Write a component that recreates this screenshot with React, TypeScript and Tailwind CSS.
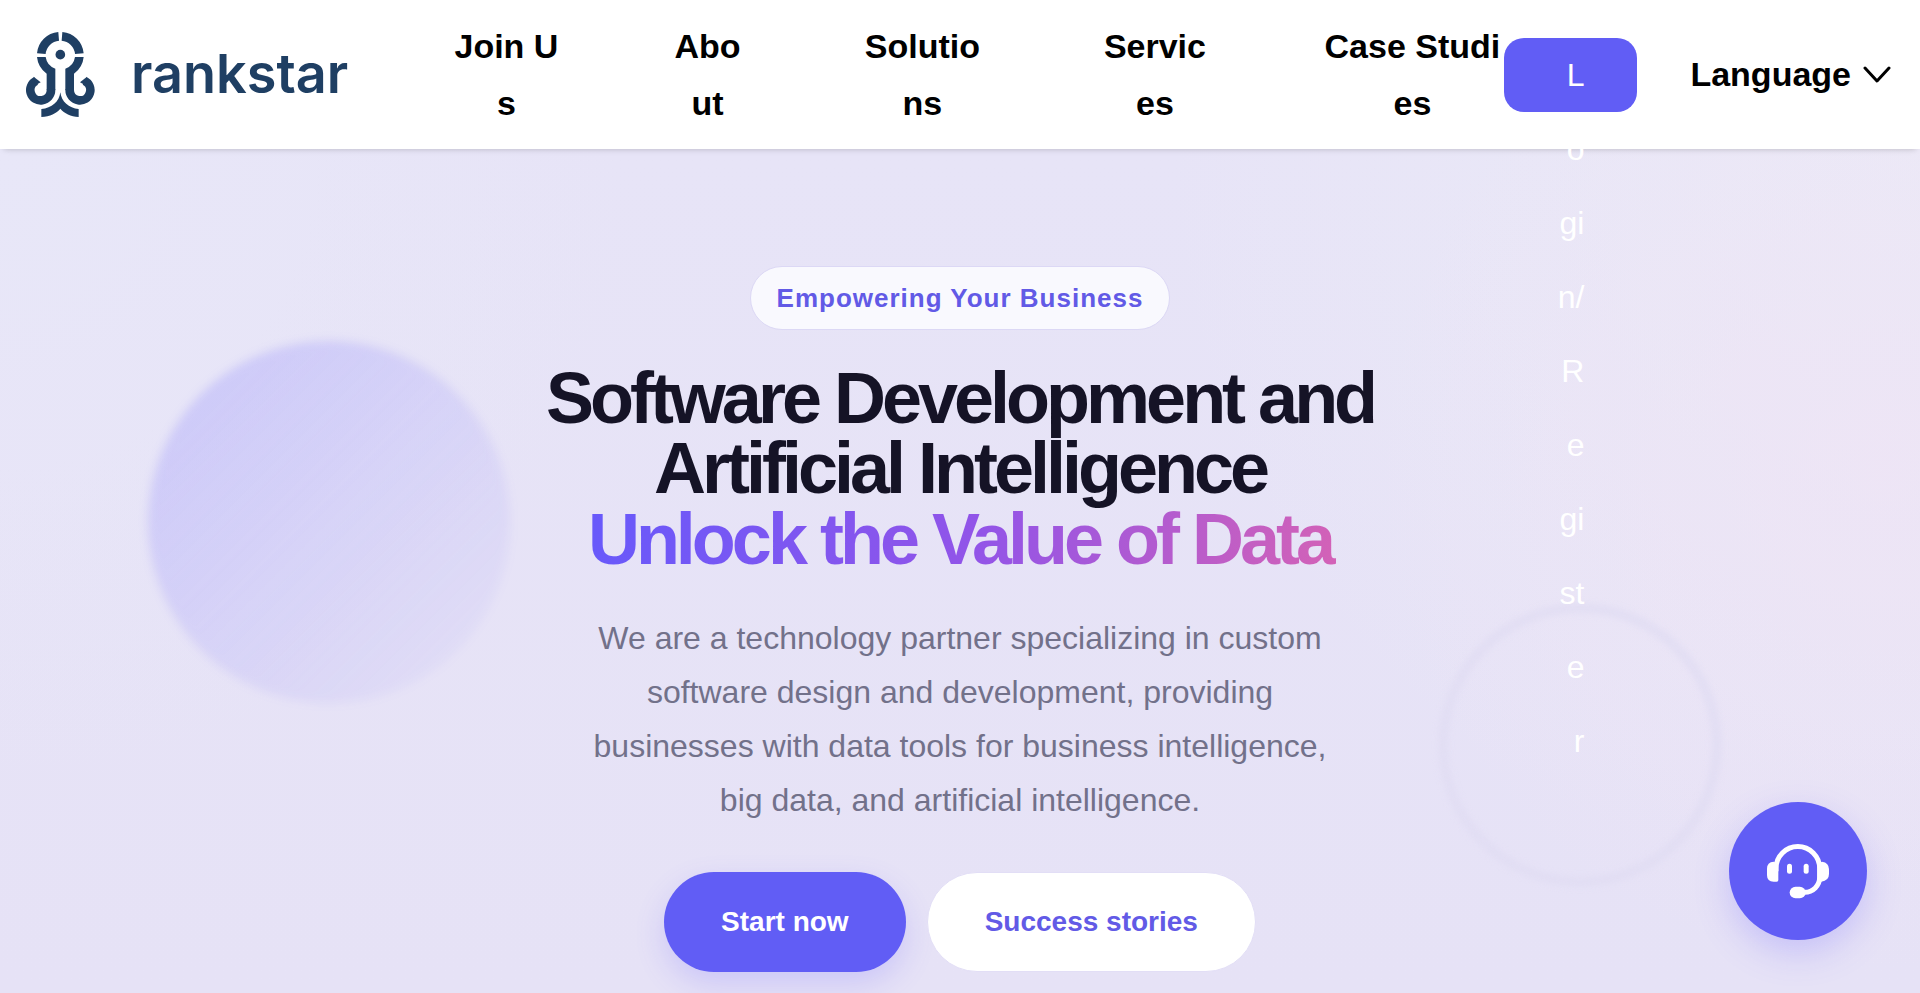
const navItems = [
  { label: 'Join Us', width: 'w-[106px]' },
  { label: 'About', width: 'w-[76px]' },
  { label: 'Solutions', width: 'w-[134px]' },
  { label: 'Services', width: 'w-[111px]' },
  { label: 'Case Studies', width: 'w-[184px]' },
];

function OctopusMark() {
  return (
    <svg viewBox="78 96 207 255" className="h-[85px] w-[69px] shrink-0" fill="none" aria-hidden="true">
      <g stroke="#1f3f63" strokeWidth="26">
        <path d="M124 161 A57 57 0 0 1 176 109" />
        <path d="M186 109 A57 57 0 0 1 238 161" />
        <path d="M153 268 V270 A31 31 0 1 1 108 242.500" />
        <path d="M209 268 V270 A31 31 0 1 0 254 242.500" />
      </g>
      <g fill="#1f3f63">
        <path d="M111 171 H137 A44 44 0 0 0 166 206 V270 H140 V221 A70 70 0 0 1 111 171 Z" />
        <path d="M251 171 H225 A44 44 0 0 1 196 206 V270 H222 V221 A70 70 0 0 0 251 171 Z" />
        <circle cx="181" cy="164" r="14.500" />
        <path d="M101 230 L122 247 L106 256 Z" />
        <path d="M261 230 L240 247 L256 256 Z" />
        <path d="M181 277 C178 305 155 325 124 327 V351 C150 350 169 340 181 326 C193 340 212 350 236 351 V327 C207 325 184 305 181 277 Z" />
      </g>
    </svg>
  );
}

function HeadsetIcon() {
  return (
    <svg viewBox="0 0 186 165" className="h-[55px] w-[62px]" fill="none" aria-hidden="true">
      <path
        d="M27 82 V73 A65.500 65.500 0 0 1 158 73 V100 A45 45 0 0 1 113 145 H98"
        stroke="#fff"
        strokeWidth="15"
      />
      <g fill="#fff">
        <path d="M34 60 V108 Q34 113 29 113 H20 Q0 113 0 93 V74 Q0 54 20 53 Z" />
        <path d="M151 60 V113 H163 Q186 110 186 90 V76 Q186 56 165 53 Z" />
        <rect x="60" y="59" width="15" height="30" rx="7.500" />
        <rect x="110" y="59" width="15" height="30" rx="7.500" />
        <rect x="68" y="128" width="48" height="35" rx="17.500" />
      </g>
    </svg>
  );
}

function Header() {
  return (
    <header className="relative z-20 flex min-h-[149px] items-center bg-white pr-[29px] pl-[26px] shadow-[0_4px_6px_-4px_rgba(0,0,0,0.22)]">
      <a href="#home" className="flex items-center gap-9 text-[#1f3f63]">
        <OctopusMark />
        <span className="pb-0.5 font-[Inter,sans-serif] text-[54px] leading-[64px] font-semibold">rankstar</span>
      </a>
      <nav className="ml-auto flex gap-[110px]">
        {navItems.map((item) => (
          <a
            key={item.label}
            href="#menu"
            className={`${item.width} text-center text-[34px] leading-[57px] font-bold break-all text-black`}
          >
            {item.label}
          </a>
        ))}
      </nav>
      <a
        href="#login"
        className="block h-[74px] w-[133px] rounded-[20px] bg-[#615df5] px-[53px] text-right text-[32px] leading-[74px] break-all text-white"
      >
        Login/Register
      </a>
      <button type="button" className="ml-[53px] flex items-center gap-3 text-[34px] leading-[57px] font-bold text-black">
        Language
        <svg viewBox="0 0 28 18" className="h-[18px] w-7" fill="none" aria-hidden="true">
          <path d="M2 2 L14 15 L26 2" stroke="#000" strokeWidth="3" strokeLinecap="round" strokeLinejoin="round" />
        </svg>
      </button>
    </header>
  );
}

function Hero() {
  return (
    <main className="relative flex flex-1 flex-col items-center overflow-hidden bg-[radial-gradient(circle_at_98%_38%,rgba(239,228,245,0.75),transparent_26%),radial-gradient(circle_at_100%_0%,#ebeaf7,transparent_36%),radial-gradient(circle_at_0%_0%,#e8e7f8,transparent_30%),linear-gradient(#e7e4f7,#e6e2f6)] px-6 pt-[117px] pb-5">
      <div className="absolute top-[192px] left-[148px] size-[362px] rounded-full bg-[linear-gradient(135deg,rgba(99,91,255,0.22),rgba(99,91,255,0.02))] blur-[5px]" />
      <div className="absolute top-[454px] right-[198px] size-[284px] rounded-full border-[10px] border-[#e1ddf3] opacity-80 blur-[3px]" />

      <p className="relative rounded-full border border-[#dcd8f5] bg-[#f9f9fe] px-[26px] py-[13px] text-[26px] leading-9 font-bold tracking-[1px] text-[#625ae6]">
        Empowering Your Business
      </p>
      <h1 className="relative mt-[33px] max-w-[940px] text-center text-[72px] leading-[70px] font-bold tracking-[-4px] text-[#151326]">
        Software Development and Artificial Intelligence
        <span className="block pt-px">
          <span className="-mr-1 bg-[linear-gradient(100deg,#6759fb,#9254e8_52%,#d462b6)] bg-clip-text pr-1 pb-2 text-transparent">
            Unlock the Value of Data
          </span>
        </span>
      </h1>
      <p className="relative mt-[37px] max-w-[760px] text-center text-[32px] leading-[54px] text-[#72718a]">
        We are a technology partner specializing in custom software design and development, providing businesses with
        data tools for business intelligence, big data, and artificial intelligence.
      </p>
      <div className="relative mt-[45px] flex gap-[21px]">
        <button
          type="button"
          className="h-[100px] rounded-full bg-[#615df5] px-[57px] text-[28px] font-bold text-white shadow-[0_12px_30px_rgba(99,91,255,0.2)]"
        >
          Start now
        </button>
        <button
          type="button"
          className="h-[100px] rounded-full border border-[#e2def6] bg-white px-[57px] text-[28px] font-bold text-[#625ae6]"
        >
          Success stories
        </button>
      </div>
    </main>
  );
}

export default function App() {
  return (
    <div className="relative flex min-h-screen flex-col font-['Liberation_Sans',Arial,sans-serif]">
      <Header />
      <Hero />
      <button
        type="button"
        aria-label="Customer support"
        className="fixed right-[53px] bottom-[53px] z-30 flex size-[138px] items-center justify-center rounded-full bg-[#615df5] shadow-[0_12px_34px_rgba(99,91,255,0.25)]"
      >
        <HeadsetIcon />
      </button>
    </div>
  );
}
